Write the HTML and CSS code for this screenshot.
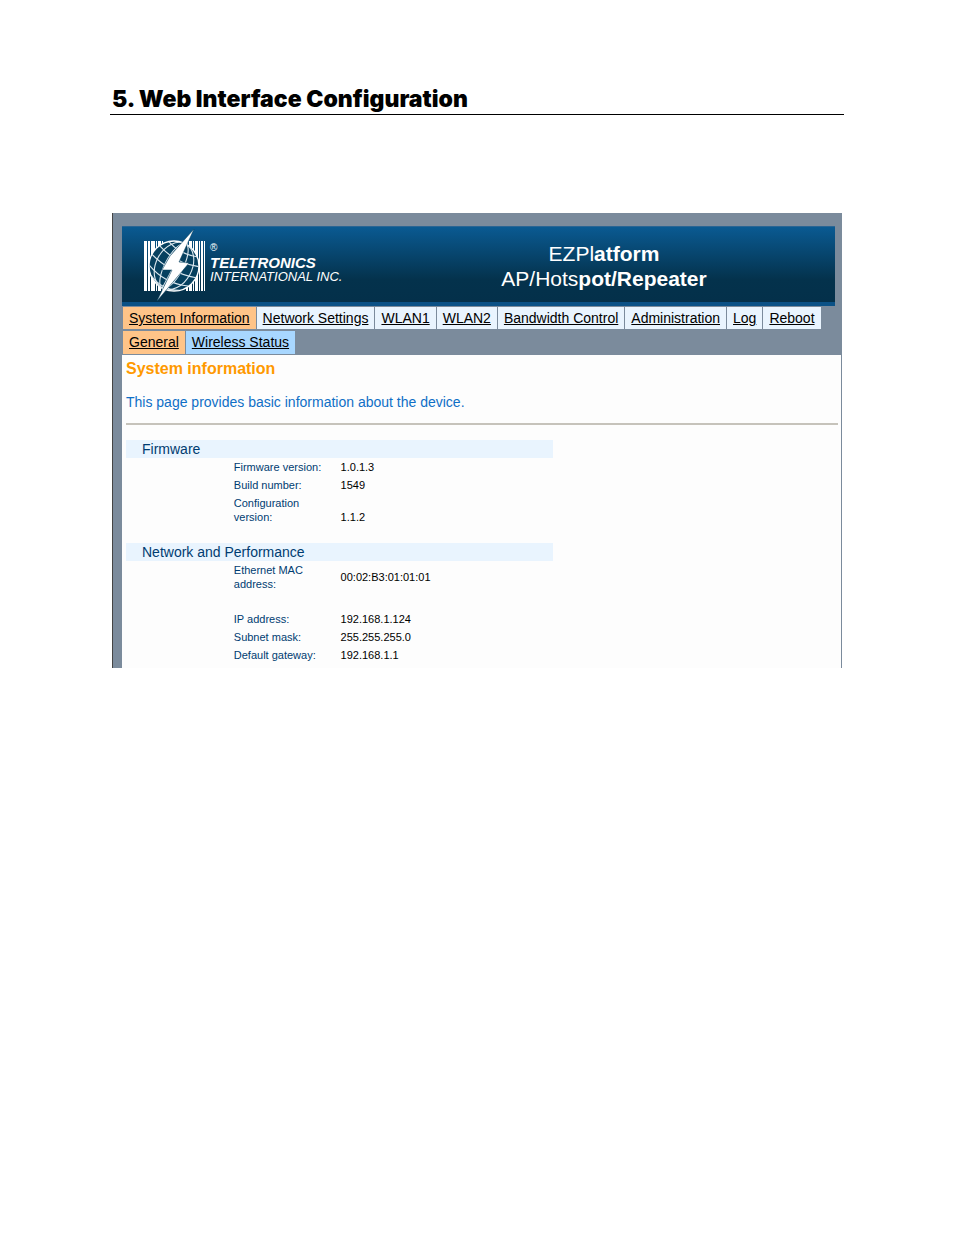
FILE: index.html
```
<!DOCTYPE html>
<html lang="en">
<head>
    <meta charset="UTF-8">
    <meta name="viewport" content="width=device-width, initial-scale=1.0">
    <title>5. Web Interface Configuration</title>
    <link rel="stylesheet" href="styles.css">
</head>
<body>
    <main class="page">
        <h1>5. Web Interface Configuration</h1>

        <div class="device">
            <header class="banner">
                <div class="logo">
                    <svg class="logo-mark" width="66" height="80" viewBox="0 0 66 80" aria-hidden="true">
                        <!-- barcode -->
                        <g fill="#fff">
                            <rect x="4" y="16" width="3" height="50"/>
                            <rect x="8" y="16" width="2" height="50"/>
                            <rect x="11" y="16" width="4" height="50"/>
                            <rect x="16" y="16" width="1" height="50"/>
                            <rect x="18" y="16" width="3" height="50"/>
                            <rect x="22" y="16" width="1" height="50"/>
                            <rect x="46" y="16" width="2" height="50"/>
                            <rect x="49" y="16" width="3" height="50"/>
                            <rect x="53" y="16" width="1" height="50"/>
                            <rect x="55" y="16" width="3" height="50"/>
                            <rect x="59" y="16" width="1" height="50"/>
                            <rect x="61" y="16" width="2" height="50"/>
                            <rect x="64" y="16" width="1" height="50"/>
                        </g>
                        <!-- globe -->
                        <circle cx="34" cy="41" r="25" fill="#06405f" stroke="#fff" stroke-width="1.4"/>
                        <g transform="rotate(28 34 41)" fill="none" stroke="#dce8ef" stroke-width="1.1">
                            <ellipse cx="34" cy="41" rx="9" ry="25"/>
                            <ellipse cx="34" cy="41" rx="18" ry="25"/>
                            <path d="M34 16V66M9 41Q34 49 59 41M12 30Q34 38 56 30M18 22Q34 28 50 22M12 52Q34 61 56 52M18 60Q34 68 50 60"/>
                        </g>
                        <!-- lightning bolt -->
                        <path d="M54 4L30 31L22 45H32L17 76L49 38L39 37Z" fill="#fff" stroke="#06405f" stroke-width=".5"/>
                    </svg>
                    <div class="logo-text">
                        <span class="logo-reg">®</span>
                        <span class="logo-name">TELETRONICS</span>
                        <span class="logo-sub">INTERNATIONAL INC.</span>
                    </div>
                </div>
                <div class="product"><span>EZPl</span>atform<br><span>AP/Hots</span>pot/Repeater</div>
            </header>

            <nav class="tabs">
                <a class="active" href="#">System Information</a>
                <a href="#">Network Settings</a>
                <a href="#">WLAN1</a>
                <a href="#">WLAN2</a>
                <a href="#">Bandwidth Control</a>
                <a href="#">Administration</a>
                <a href="#">Log</a>
                <a href="#">Reboot</a>
            </nav>
            <nav class="tabs subtabs">
                <a class="active" href="#">General</a>
                <a href="#">Wireless Status</a>
            </nav>

            <section class="content">
                <h2>System information</h2>
                <p>This page provides basic information about the device.</p>
                <hr>

                <table>
                    <colgroup>
                        <col class="col-indent">
                        <col class="col-label">
                        <col>
                    </colgroup>
                    <tr class="group"><th colspan="3">Firmware</th></tr>
                    <tr><td></td><th>Firmware version:</th><td>1.0.1.3</td></tr>
                    <tr><td></td><th>Build number:</th><td>1549</td></tr>
                    <tr class="low"><td></td><th>Configuration<br>version:</th><td>1.1.2</td></tr>
                    <tr class="spacer"><td colspan="3"></td></tr>
                    <tr class="group"><th colspan="3">Network and Performance</th></tr>
                    <tr><td></td><th>Ethernet MAC<br>address:</th><td>00:02:B3:01:01:01</td></tr>
                    <tr class="spacer"><td colspan="3"></td></tr>
                    <tr><td></td><th>IP address:</th><td>192.168.1.124</td></tr>
                    <tr><td></td><th>Subnet mask:</th><td>255.255.255.0</td></tr>
                    <tr><td></td><th>Default gateway:</th><td>192.168.1.1</td></tr>
                </table>
            </section>
        </div>
    </main>
</body>
</html>
```
FILE: styles.css
```
body {
    margin: 0;
    background-color: #fff;
    font-family: "Liberation Sans", Arial, sans-serif;
    color: #000;
}

.page {
    padding: 84px 110px;
}

h1 {
    margin: 0 0 98px;
    padding-left: 2px;
    border-bottom: 1px solid #000;
    font-family: Inter, sans-serif;
    font-size: 23px;
    font-weight: 900;
    line-height: 30px;
}

.device {
    margin: 0 2px;
    padding: 13px 0 0 9px;
    border-left: 1px solid #444;
    border-right: 1px solid #7b8b9c;
    background-color: #7b8b9c;
}

/* banner */
.banner {
    display: flex;
    align-items: center;
    height: 75px;
    margin: 0 6px 1px 0;
    border-top: 1px solid #2a6594;
    border-bottom: 4px solid #0a5186;
    background: linear-gradient(#0a5a92, #04324c 70%, #04304a);
    color: #fff;
}

.logo {
    display: flex;
    width: 251px;
    padding-left: 18px;
    box-sizing: border-box;
}

.logo-text {
    display: flex;
    flex-direction: column;
    padding: 16px 0 0 4px;
    font-style: italic;
    white-space: nowrap;
}

.logo-reg {
    font-size: 10px;
    font-style: normal;
    line-height: 14px;
}

.logo-name {
    font-size: 15px;
    font-weight: bold;
    line-height: 15px;
}

.logo-sub {
    font-size: 13px;
    line-height: 14px;
}

.product {
    flex: 1;
    padding-top: 2px;
    font-size: 21px;
    font-weight: bold;
    line-height: 25px;
    text-align: center;
}

.product span {
    font-weight: normal;
}

/* tabs */
.tabs {
    display: flex;
    gap: 1px;
    padding: 0 0 2px 1px;
}

.tabs a {
    padding: 0 6px;
    background-color: #e9f4fe;
    color: #000;
    font-size: 14px;
    line-height: 22px;
}

.subtabs {
    padding-bottom: 1px;
}

.subtabs a {
    background-color: #a8d7ff;
    line-height: 23px;
}

.tabs a.active {
    background-color: #ffc488;
}

/* content */
.content {
    padding: 4px 3px 4px 4px;
    background-color: #fdfdfd;
}

h2 {
    margin: 0;
    color: #f90;
    font-size: 16px;
    line-height: 20px;
}

p {
    margin: 13px 0 11px;
    color: #0f6fc6;
    font-size: 14px;
    line-height: 20px;
}

hr {
    height: 2px;
    margin: 0 0 15px;
    border: 0;
    background-color: #c6c3bb;
}

table {
    width: 60%;
    border-collapse: collapse;
    table-layout: fixed;
    font-size: 11px;
    line-height: 14px;
}

.col-indent,
.col-label {
    width: 25%;
}

th,
td {
    padding: 2px 1px;
    font-weight: normal;
    text-align: left;
}

th {
    color: #003c71;
}

.group th {
    padding: 0 16px;
    background-color: #e9f4fe;
    font-size: 14px;
    line-height: 18px;
}

.low td {
    vertical-align: bottom;
}

.spacer td {
    height: 13px;
}
```
